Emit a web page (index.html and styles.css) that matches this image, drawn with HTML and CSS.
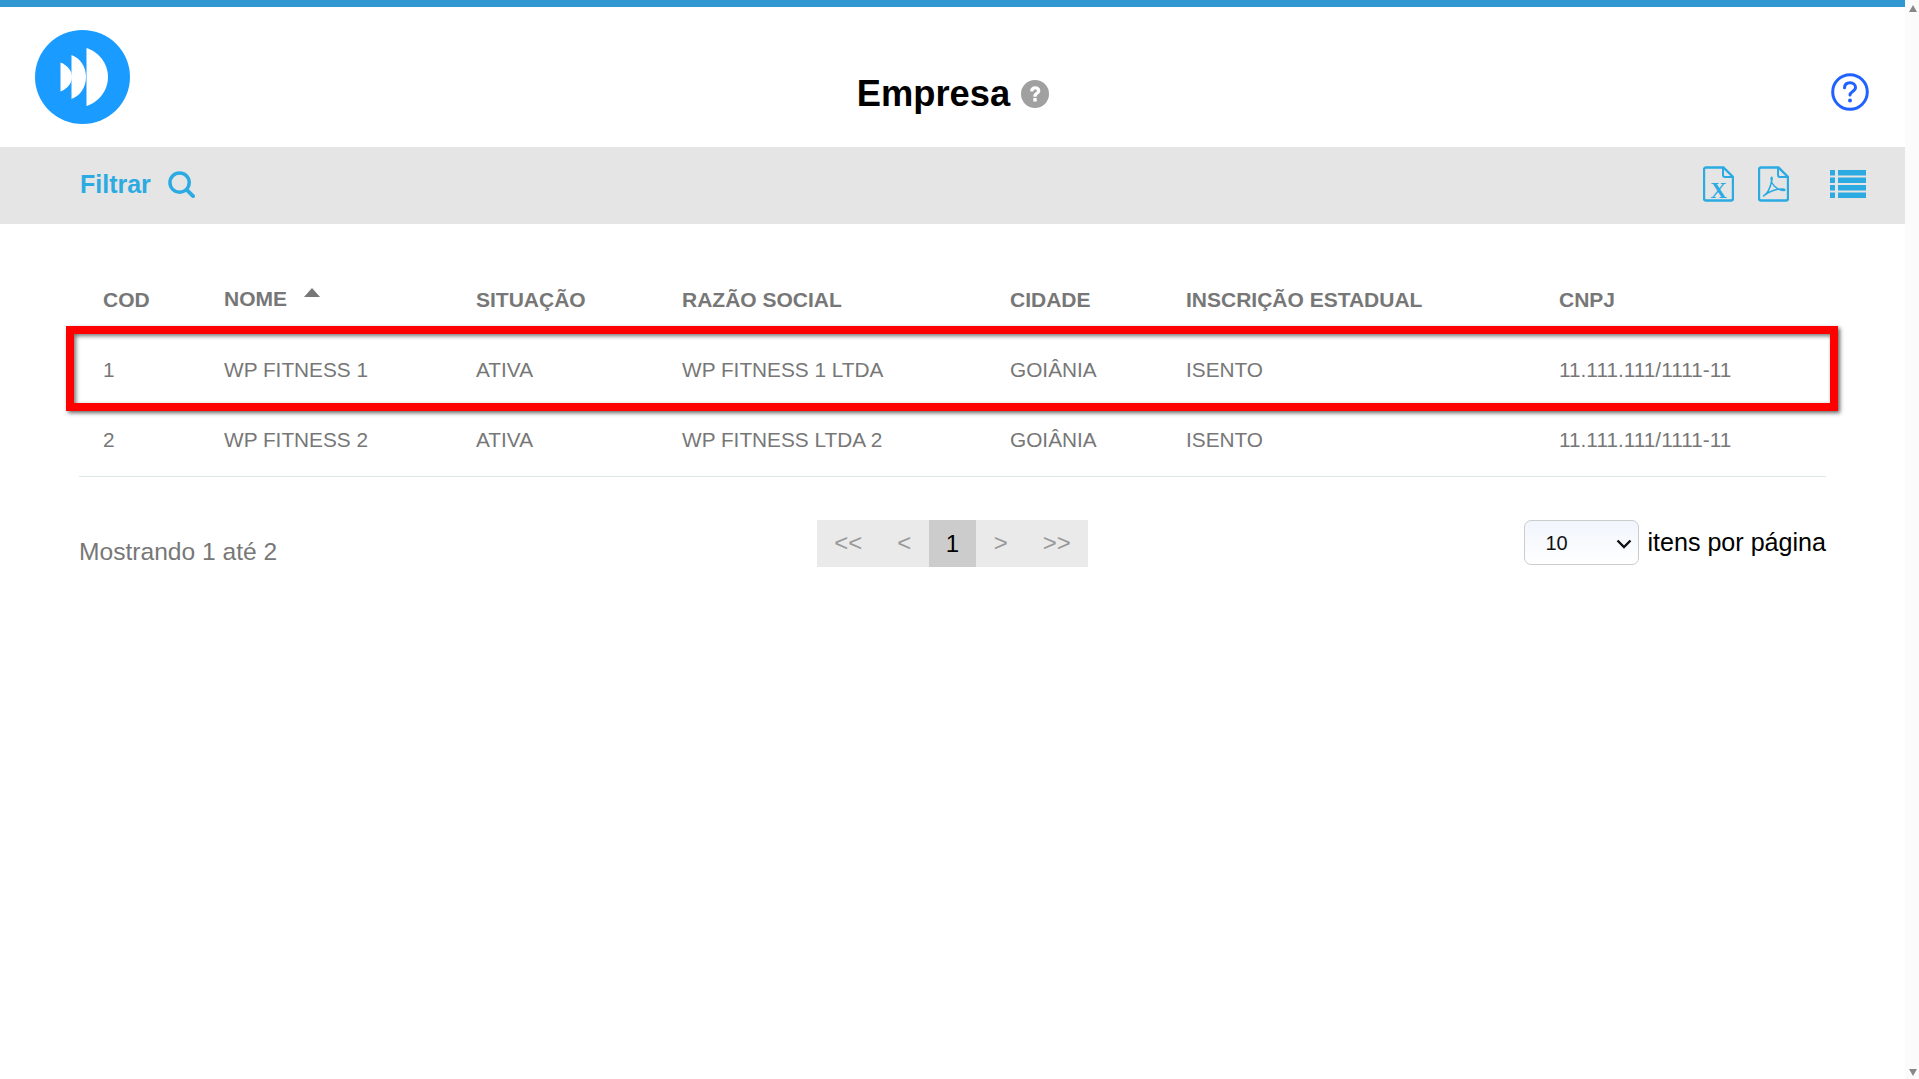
FILE: index.html
```html
<!DOCTYPE html>
<html lang="pt-BR">
<head>
<meta charset="utf-8">
<title>Empresa</title>
<link rel="stylesheet" href="styles.css">
</head>
<body>
<div class="page">
  <main class="main">
    <div class="topline"></div>
    <header class="header">
      <svg class="logo" viewBox="0 0 95 94" aria-label="Logo">
        <ellipse cx="47.5" cy="47" rx="47.5" ry="47" fill="#1a9bff"/>
        <path d="M25.5 32.5C32 35 37 40.500 37 47C37 53.500 32 59 25.500 61.500Z" fill="#fff"/>
        <path d="M36.500 25C45 28 51 36.500 51 47C51 57.500 45 66 36.500 69Z" fill="#fff"/>
        <path d="M51.500 18C63 21.500 73 33 73 47C73 61 63 72.500 51.500 76Z" fill="#fff"/>
      </svg>
      <div class="title-wrap">
        <h1 class="title">Empresa</h1>
        <svg class="title-help" viewBox="0 0 28 28">
          <circle cx="14" cy="14" r="14" fill="#a0a0a0"/>
          <path d="M9 11.200C9.200 8 11.300 6.300 14.200 6.300C17.200 6.300 19.300 8 19.300 10.700C19.300 12.600 18.300 13.600 16.900 14.500C15.800 15.200 15.700 15.600 15.700 16.700H12.300C12.300 14.600 12.800 13.500 14.500 12.400C15.500 11.800 15.900 11.400 15.900 10.800C15.900 10 15.200 9.500 14.200 9.500C13 9.500 12.400 10.200 12.300 11.600Z" fill="#fff"/>
          <rect x="12.300" y="18" width="3.400" height="3.500" fill="#fff"/>
        </svg>
      </div>
      <svg class="help" viewBox="0 0 38 38">
        <circle cx="19" cy="19" r="17.300" fill="none" stroke="#1f62ff" stroke-width="3"/>
        <path d="M13.500 14.800C13.700 11.600 16 9.800 19 9.800C22.200 9.800 24.500 11.700 24.500 14.500C24.500 18.500 19 18.300 19 22" fill="none" stroke="#1f62ff" stroke-width="3" stroke-linecap="round"/>
        <circle cx="19" cy="27.500" r="2" fill="#1f62ff"/>
      </svg>
    </header>
    <div class="toolbar">
      <a class="filter">
        <span>Filtrar</span>
        <svg class="search" viewBox="0 0 28 28">
          <circle cx="12" cy="12" r="10" fill="none" stroke="#2cabe3" stroke-width="3.600"/>
          <path d="M19.500 19.500L26 26" stroke="#2cabe3" stroke-width="4" stroke-linecap="round"/>
        </svg>
      </a>
      <div class="tools">
        <svg class="file" viewBox="0 0 31 36">
          <path d="M2.500 1.500H20L29.500 11V32.500C29.500 33.600 28.600 34.500 27.500 34.500H2.500C1.400 34.500 .5 33.600 .5 32.500V3.500C.5 2.400 1.400 1.500 2.500 1.500Z" transform="translate(.5 0)" fill="none" stroke="#2cabe3" stroke-width="2.400"/>
          <path d="M20 1.500V9C20 10.100 20.900 11 22 11H30" fill="none" stroke="#2cabe3" stroke-width="2"/>
          <text class="file-x" x="15.500" y="31.500">X</text>
        </svg>
        <svg class="file" viewBox="0 0 31 36">
          <path d="M2.500 1.500H20L29.500 11V32.500C29.500 33.600 28.600 34.500 27.500 34.500H2.500C1.400 34.500 .5 33.600 .5 32.500V3.500C.5 2.400 1.400 1.500 2.500 1.500Z" transform="translate(.5 0)" fill="none" stroke="#2cabe3" stroke-width="2.400"/>
          <path d="M20 1.500V9C20 10.100 20.900 11 22 11H30" fill="none" stroke="#2cabe3" stroke-width="2"/>
          <path d="M5.500 30C9 28 12.500 21.500 14 13.500C14.500 10.500 13 10.500 13.200 13.500C13.500 18 17.500 23.500 25.500 24.500C27.500 24.700 27.500 23.200 25 23C19.500 22.500 11 25.500 6 29.500Z" fill="none" stroke="#2cabe3" stroke-width="1.500" stroke-linejoin="round"/>
        </svg>
        <svg class="list" viewBox="0 0 36 28">
          <g fill="#2cabe3">
            <rect x="0" y="0" width="5" height="5.500"/><rect x="8" y="0" width="28" height="5.500"/>
            <rect x="0" y="7.500" width="5" height="5.500"/><rect x="8" y="7.500" width="28" height="5.500"/>
            <rect x="0" y="15" width="5" height="5.500"/><rect x="8" y="15" width="28" height="5.500"/>
            <rect x="0" y="22.500" width="5" height="5.500"/><rect x="8" y="22.500" width="28" height="5.500"/>
          </g>
        </svg>
      </div>
    </div>
    <section class="content">
      <table class="grid">
        <colgroup>
          <col class="c1"><col class="c2"><col class="c3"><col class="c4"><col class="c5"><col class="c6"><col>
        </colgroup>
        <thead>
          <tr>
            <th>COD</th>
            <th><span class="sorted">NOME<i class="caret"></i></span></th>
            <th>SITUAÇÃO</th>
            <th>RAZÃO SOCIAL</th>
            <th>CIDADE</th>
            <th>INSCRIÇÃO ESTADUAL</th>
            <th>CNPJ</th>
          </tr>
        </thead>
        <tbody>
          <tr class="row-first">
            <td>1</td><td>WP FITNESS 1</td><td>ATIVA</td><td>WP FITNESS 1 LTDA</td><td>GOIÂNIA</td><td>ISENTO</td><td>11.111.111/1111-11</td>
          </tr>
          <tr class="row-last">
            <td>2</td><td>WP FITNESS 2</td><td>ATIVA</td><td>WP FITNESS LTDA 2</td><td>GOIÂNIA</td><td>ISENTO</td><td>11.111.111/1111-11</td>
          </tr>
        </tbody>
      </table>
      <div class="highlight"></div>
      <div class="footer">
        <div class="count">Mostrando 1 até 2</div>
        <nav class="pager">
          <a class="pg">&lt;&lt;</a>
          <a class="pg">&lt;</a>
          <a class="pg active">1</a>
          <a class="pg">&gt;</a>
          <a class="pg">&gt;&gt;</a>
        </nav>
        <div class="perpage">
          <div class="select-wrap">
            <select class="select"><option>10</option><option>25</option><option>50</option></select>
            <svg class="chev" viewBox="0 0 16 10"><path d="M1.500 1.500L8 8L14.500 1.500" fill="none" stroke="#111" stroke-width="2.400"/></svg>
          </div>
          <span class="perpage-label">itens por página</span>
        </div>
      </div>
    </section>
  </main>
  <aside class="scrollbar">
    <i class="arrow-up"></i>
    <i class="arrow-down"></i>
  </aside>
</div>
</body>
</html>
```
FILE: styles.css
```css
* { box-sizing: border-box; }
html, body { margin: 0; height: 100%; overflow: hidden; background: #fff; }
body { font-family: "Liberation Sans", Arial, sans-serif; color: #777; }
.page { display: flex; height: 1079px; }
.main { flex: 1; min-width: 0; }
.topline { height: 7px; background: #3097d1; }

.header { position: relative; height: 140px; display: flex; justify-content: center; align-items: flex-start; }
.logo { position: absolute; left: 35px; top: 23px; width: 95px; height: 94px; }
.title-wrap { display: flex; align-items: center; gap: 11px; margin-top: 66px; margin-left: 1px; height: 41px; }
.title { margin: 0; font-size: 36.300px; line-height: 41px; font-weight: 700; color: #000; }
.title-help { width: 28px; height: 28px; flex: none; }
.help { position: absolute; left: 1831px; top: 66px; width: 38px; height: 38px; }

.toolbar { height: 77px; background: #e5e5e5; display: flex; align-items: center; justify-content: space-between; padding: 0 39px 3px 80px; }
.filter { display: flex; align-items: center; gap: 17px; color: #2cabe3; font-size: 25px; font-weight: 700; }
.search { width: 27px; height: 27px; }
.tools { display: flex; align-items: center; }
.file { width: 31px; height: 36px; margin-right: 24px; }
.file + .file { margin-right: 41px; }
.list { width: 36px; height: 28px; margin-top: -1px; }
.file-x { font-family: "Liberation Serif", serif; font-weight: 700; font-size: 23px; fill: #2cabe3; text-anchor: middle; }

.content { position: relative; padding: 43px 79px 0; }
.grid { width: 100%; border-collapse: collapse; table-layout: fixed; font-size: 20.800px; }
.c1 { width: 121px; } .c2 { width: 252px; } .c3 { width: 206px; }
.c4 { width: 328px; } .c5 { width: 176px; } .c6 { width: 373px; }
.grid th { height: 66px; padding: 0 0 0 24px; text-align: left; font-size: 21px; font-weight: 700; color: #777; vertical-align: middle; }
.grid td { padding: 0 0 0 24px; color: #777; }
.row-first td { height: 71px; padding-top: 2px; }
.row-last td { height: 72px; padding-top: 0; border-bottom: 1px solid #dee6e8; }
.sorted { position: relative; top: -1px; display: inline-block; }
.caret { position: absolute; left: 80px; top: 1px; width: 0; height: 0; border-left: 8px solid transparent; border-right: 8px solid transparent; border-bottom: 9px solid #777; }

.highlight { position: absolute; left: 66px; top: 102px; width: 1772px; height: 85px; border: 8px solid #f00; box-shadow: 2px 2px 4px rgba(0,0,0,.6), inset 2px 2px 4px rgba(0,0,0,.55); pointer-events: none; }

.footer { display: grid; grid-template-columns: 1fr auto 1fr; margin-top: 43px; align-items: start; }
.count { font-size: 24.600px; padding-top: 17px; line-height: 30px; }
.pager { display: flex; height: 47px; background: #eaeaea; font-size: 24px; line-height: 46px; color: #999; }
.pg { padding: 0 17.500px; }
.pg.active { background: #ccc; color: #000; padding: 0 17px; line-height: 47px; }
.perpage { display: flex; justify-content: flex-end; align-items: center; gap: 8px; height: 46px; }
.select-wrap { position: relative; width: 115px; height: 45px; }
.select { appearance: none; width: 100%; height: 100%; padding: 0 0 0 20px; border: 1px solid #ccc; border-radius: 7px; background: linear-gradient(#f1f5fd, #fff); font: 20px "Liberation Sans", Arial, sans-serif; color: #111; }
.chev { position: absolute; right: 7px; top: 19px; width: 16px; height: 10px; pointer-events: none; }
.perpage-label { font-size: 25.100px; color: #000; }

.scrollbar { width: 14px; flex: none; background: #fbfbfb; display: flex; flex-direction: column; justify-content: space-between; align-items: center; padding: 5px 0 3px 2px; }
.arrow-up { width: 0; height: 0; border-left: 4.500px solid transparent; border-right: 4.500px solid transparent; border-bottom: 7px solid #888; }
.arrow-down { width: 0; height: 0; border-left: 4.500px solid transparent; border-right: 4.500px solid transparent; border-top: 7px solid #888; }
```
